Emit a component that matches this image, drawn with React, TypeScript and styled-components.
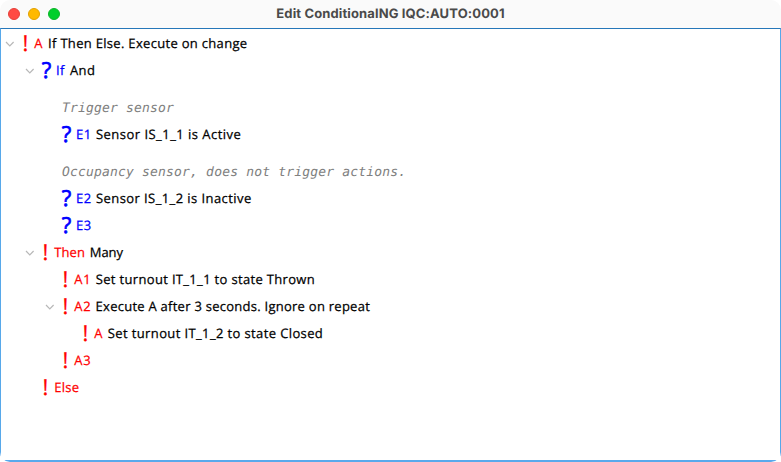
import React from 'react';
import styled, { createGlobalStyle } from 'styled-components';

type Kind = 'action' | 'expression';

interface Node {
  depth: number;
  kind: Kind;
  label: string;
  labelWidth: number;
  labelTracking?: number;
  text?: string;
  tracking?: number;
  open?: boolean;
  comment?: string;
}

const nodes: Node[] = [
  { depth: 0, kind: 'action', label: 'A', labelWidth: 13.9, text: 'If Then Else. Execute on change', tracking: 0.31, open: true },
  { depth: 1, kind: 'expression', label: 'If', labelWidth: 14, labelTracking: 0.5, text: 'And', tracking: 0.35, open: true },
  { depth: 2, kind: 'expression', label: 'E1', labelWidth: 20, labelTracking: 0.6, text: 'Sensor IS_1_1 is Active', tracking: 0.47, comment: 'Trigger sensor' },
  { depth: 2, kind: 'expression', label: 'E2', labelWidth: 20, labelTracking: 0.6, text: 'Sensor IS_1_2 is Inactive', tracking: 0.42, comment: 'Occupancy sensor, does not trigger actions.' },
  { depth: 2, kind: 'expression', label: 'E3', labelWidth: 20, labelTracking: 0.6 },
  { depth: 1, kind: 'action', label: 'Then', labelWidth: 35.5, labelTracking: 0.15, text: 'Many', tracking: 0, open: true },
  { depth: 2, kind: 'action', label: 'A1', labelWidth: 21.6, labelTracking: 0.8, text: 'Set turnout IT_1_1 to state Thrown', tracking: 0.33 },
  { depth: 2, kind: 'action', label: 'A2', labelWidth: 21.4, labelTracking: 0.8, text: 'Execute A after 3 seconds. Ignore on repeat', tracking: 0.26, open: true },
  { depth: 3, kind: 'action', label: 'A', labelWidth: 13.6, text: 'Set turnout IT_1_2 to state Closed', tracking: 0.38 },
  { depth: 2, kind: 'action', label: 'A3', labelWidth: 21.4, labelTracking: 0.8 },
  { depth: 1, kind: 'action', label: 'Else', labelWidth: 30, labelTracking: 0.25 },
];

const GlobalStyle = createGlobalStyle`
  body {
    margin: 0;
    background: #fff;
  }
`;

const Window = styled.div`
  box-sizing: border-box;
  display: flex;
  flex-direction: column;
  width: 781px;
  height: 462px;
  border-radius: 10px;
  overflow: hidden;
  background: #fff;
  font-family: 'Open Sans', 'Noto Sans', sans-serif;
  font-size: 13px;
  text-rendering: geometricPrecision;
`;

const TitleBar = styled.header`
  box-sizing: border-box;
  display: grid;
  grid-template-columns: 100px 1fr 100px;
  align-items: center;
  height: 28px;
  flex: none;
  padding-left: 8px;
  padding-right: 8px;
  background: #fafafa;
`;

const Lights = styled.div`
  display: flex;
  gap: 8px;
`;

const Light = styled.span<{ $fill: string; $edge: string }>`
  box-sizing: border-box;
  width: 12px;
  height: 12px;
  border: 1px solid ${(p) => p.$edge};
  border-radius: 50%;
  background: ${(p) => p.$fill};
`;

const Title = styled.h1`
  margin: 0;
  color: #4a4a4a;
  font: 700 13px/28px Inter, sans-serif;
  letter-spacing: 0.13px;
  text-align: center;
  white-space: nowrap;
`;

const Tree = styled.main`
  box-sizing: border-box;
  flex: 1;
  padding-top: 1px;
  border: 1px solid #57a8ea;
  border-top-color: #2677b9;
  border-bottom: 2px solid #59a9ec;
`;

const Comment = styled.div<{ $depth: number }>`
  box-sizing: border-box;
  height: 37px;
  padding: 13px 0 0 ${(p) => p.$depth * 20 + 21}px;
  color: #808080;
  font: italic 13px/24px 'DejaVu Sans Mono', monospace;
  letter-spacing: 0.18px;
  white-space: pre;
`;

const Row = styled.div<{ $depth: number }>`
  display: flex;
  height: 27px;
  padding-left: ${(p) => p.$depth * 20}px;
  line-height: 27px;
  white-space: nowrap;
`;

const Toggle = styled.span`
  display: flex;
  align-items: center;
  flex: none;
  width: 20.8px;
  padding-left: 4px;
  box-sizing: border-box;
`;

const Mark = styled.span<{ $kind: Kind }>`
  box-sizing: border-box;
  flex: none;
  width: ${(p) => (p.$kind === 'action' ? 12.4 : 14.2)}px;
  padding-left: ${(p) => (p.$kind === 'action' ? 0.6 : 0)}px;
  color: ${(p) => (p.$kind === 'action' ? '#f00' : '#00f')};
  font-size: 22px;
  -webkit-text-stroke: ${(p) => (p.$kind === 'action' ? 0.3 : 0.7)}px currentColor;
`;

const Label = styled.span<{ $kind: Kind; $width: number; $tracking: number }>`
  flex: none;
  width: ${(p) => p.$width}px;
  color: ${(p) => (p.$kind === 'action' ? '#f00' : '#00f')};
  letter-spacing: ${(p) => p.$tracking}px;
  -webkit-text-stroke: 0.25px currentColor;
`;

const Text = styled.span<{ $tracking: number }>`
  color: #000;
  letter-spacing: ${(p) => p.$tracking}px;
  -webkit-text-stroke: 0.25px currentColor;
`;

function Chevron() {
  return (
    <svg width="10" height="8" viewBox="0 0 10 8" fill="none" stroke="#b8b8b8" strokeWidth="1.2">
      <path d="M1 2 L4.8 6 L8.6 2" />
    </svg>
  );
}

function TreeNode({ node }: { node: Node }) {
  return (
    <>
      {node.comment && <Comment $depth={node.depth}>{node.comment}</Comment>}
      <Row $depth={node.depth}>
        <Toggle>{node.open && <Chevron />}</Toggle>
        <Mark $kind={node.kind}>{node.kind === 'action' ? '!' : '?'}</Mark>
        <Label $kind={node.kind} $width={node.labelWidth} $tracking={node.labelTracking ?? 0}>
          {node.label}
        </Label>
        {node.text && <Text $tracking={node.tracking ?? 0}>{node.text}</Text>}
      </Row>
    </>
  );
}

export default function App() {
  return (
    <Window>
      <GlobalStyle />
      <TitleBar>
        <Lights>
          <Light $fill="#ff4a43" $edge="#e5403a" />
          <Light $fill="#ffb900" $edge="#e2a100" />
          <Light $fill="#00cf2b" $edge="#0db52a" />
        </Lights>
        <Title>Edit ConditionalNG IQC:AUTO:0001</Title>
      </TitleBar>
      <Tree>
        {nodes.map((node, i) => (
          <TreeNode key={i} node={node} />
        ))}
      </Tree>
    </Window>
  );
}
